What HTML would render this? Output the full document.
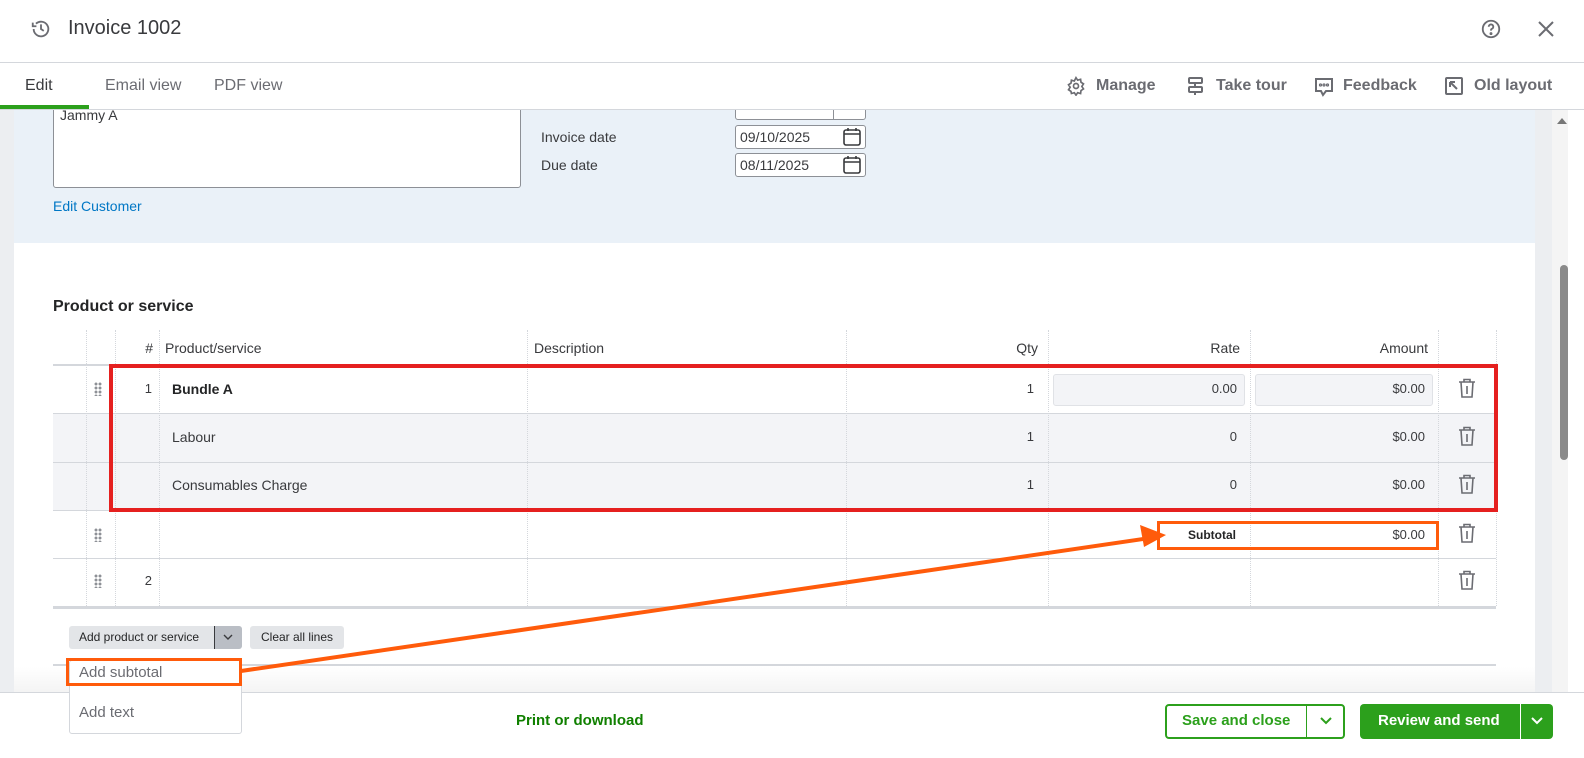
<!DOCTYPE html>
<html><head><meta charset="utf-8"><style>
*{box-sizing:border-box;margin:0;padding:0}
body{width:1584px;height:758px;overflow:hidden;background:#fff;font-family:"Liberation Sans",sans-serif;color:#393a3d;position:relative}
.a{position:absolute}
.t{font-size:14px}
.r{text-align:right}
.vl{position:absolute;width:0;border-left:1px dotted #d4d7dc}
.hl{position:absolute;height:1px;background:#d4d7dc}
.dots{position:absolute;width:8px;height:14px;background:radial-gradient(circle,#8d9096 1.3px,transparent 1.6px) 0 0/4px 4px}
</style></head><body>
<!-- side strips -->
<div class="a" style="left:0;top:110px;width:14px;height:582px;background:#eceef1"></div>
<div class="a" style="left:1535px;top:110px;width:17px;height:582px;background:#eceef1"></div>
<div class="a" style="left:1552px;top:110px;width:16px;height:582px;background:#f4f4f4"></div>
<div class="a" style="left:1560px;top:265px;width:8px;height:195px;background:#8a8a8a;border-radius:4px"></div>
<div class="a" style="left:1557px;top:118px;border:5px solid transparent;border-bottom:6px solid #777;border-top:0"></div>
<!-- blue area -->
<div class="a" style="left:14px;top:110px;width:1521px;height:133px;background:#eaf1f8"></div>
<div class="a" style="left:53px;top:90px;width:468px;height:98px;background:#fff;border:1px solid #8d9096;border-radius:3px"></div>
<div class="a t" style="left:60px;top:107px;color:#393a3d">Jammy A</div>
<div class="a" style="left:53px;top:198px;font-size:14px;color:#0077c5">Edit Customer</div>
<div class="a" style="left:735px;top:90px;width:131px;height:30px;background:#fff;border:1px solid #8d9096;border-radius:3px"></div>
<div class="a" style="left:833px;top:90px;width:1px;height:30px;background:#8d9096"></div>
<div class="a t" style="left:541px;top:129px">Invoice date</div>
<div class="a t" style="left:541px;top:157px">Due date</div>
<div class="a" style="left:735px;top:125px;width:131px;height:24px;background:#fff;border:1px solid #8d9096;border-radius:3px"></div>
<div class="a t" style="left:740px;top:129px">09/10/2025</div>
<div class="a" style="left:735px;top:153px;width:131px;height:24px;background:#fff;border:1px solid #8d9096;border-radius:3px"></div>
<div class="a t" style="left:740px;top:157px">08/11/2025</div>
<svg class="a" style="left:842px;top:127px" width="20" height="20" viewBox="0 0 20 20" fill="none" stroke="#393a3d" stroke-width="1.6"><rect x="2" y="3" width="16" height="15" rx="2"/><path d="M2 7h16M6 1v3M14 1v3"/></svg>
<svg class="a" style="left:842px;top:155px" width="20" height="20" viewBox="0 0 20 20" fill="none" stroke="#393a3d" stroke-width="1.6"><rect x="2" y="3" width="16" height="15" rx="2"/><path d="M2 7h16M6 1v3M14 1v3"/></svg>
<!-- header (on top) -->
<div class="a" style="left:0;top:0;width:1584px;height:110px;background:#fff"></div>
<svg class="a" style="left:30px;top:18px" width="22" height="22" viewBox="0 0 24 24" fill="none" stroke="#6b6c72" stroke-width="2"><path d="M4 12a8 8 0 1 0 2.5-5.8"/><path d="M3 5v4h4"/><path d="M12 7v5l3 2"/></svg>
<div class="a" style="left:68px;top:17px;font-size:20px;color:#393a3d">Invoice 1002</div>
<svg class="a" style="left:1480px;top:18px" width="22" height="22" viewBox="0 0 24 24" fill="none" stroke="#6b6c72" stroke-width="2"><circle cx="12" cy="12" r="9"/><path d="M9.5 9.5a2.5 2.5 0 1 1 3.5 2.3c-.7.3-1 .8-1 1.5v.5"/><circle cx="12" cy="17" r=".6" fill="#6b6c72"/></svg>
<svg class="a" style="left:1537px;top:20px" width="18" height="18" viewBox="0 0 18 18" stroke="#6b6c72" stroke-width="2"><path d="M2 2l14 14M16 2L2 16"/></svg>
<div class="hl" style="left:0;top:62px;width:1584px"></div>
<div class="a" style="left:25px;top:77px;font-size:16px;color:#393a3d">Edit</div>
<div class="a" style="left:0;top:105px;width:89px;height:4px;background:#2ca01c"></div>
<div class="a" style="left:105px;top:77px;font-size:16px;color:#6b6c72">Email view</div>
<div class="a" style="left:214px;top:77px;font-size:16px;color:#6b6c72">PDF view</div>
<svg class="a" style="left:1066px;top:76px" width="20" height="20" viewBox="0 0 24 24" fill="none" stroke="#6b6c72" stroke-width="2"><circle cx="12" cy="12" r="3"/><path d="M12 2l2 3 3.5-1 .5 3.5 3 2-2 3 2 3-3 2-.5 3.5-3.5-1-2 3-2-3-3.5 1L6 18.5 3 16.5l2-3-2-3 3-2L6.5 5 10 6z"/></svg>
<div class="a" style="left:1096px;top:77px;font-size:16px;font-weight:bold;color:#6b6c72">Manage</div>
<svg class="a" style="left:1186px;top:76px" width="20" height="20" viewBox="0 0 20 20" fill="none" stroke="#6b6c72" stroke-width="2"><rect x="3" y="2" width="13" height="5" rx="1"/><rect x="3" y="11" width="13" height="5" rx="1"/><path d="M9 7v4M9 16v3"/></svg>
<div class="a" style="left:1216px;top:77px;font-size:16px;font-weight:bold;color:#6b6c72">Take tour</div>
<svg class="a" style="left:1313px;top:76px" width="22" height="22" viewBox="0 0 22 22" fill="none" stroke="#6b6c72" stroke-width="2"><path d="M3 3h16v12h-6l-3 4-2-4H3z"/><circle cx="7.5" cy="9" r=".6"/><circle cx="11" cy="9" r=".6"/><circle cx="14.5" cy="9" r=".6"/></svg>
<div class="a" style="left:1343px;top:77px;font-size:16px;font-weight:bold;color:#6b6c72">Feedback</div>
<svg class="a" style="left:1444px;top:76px" width="20" height="20" viewBox="0 0 20 20" fill="none" stroke="#6b6c72" stroke-width="2"><rect x="2" y="2" width="16" height="16" rx="1"/><path d="M6 6l7 7M6 6v5M6 6h5"/></svg>
<div class="a" style="left:1474px;top:77px;font-size:16px;font-weight:bold;color:#6b6c72">Old layout</div>
<div class="hl" style="left:0;top:109px;width:1584px"></div>
<!-- product -->
<div class="a" style="left:53px;top:298px;font-size:16px;font-weight:bold;color:#242526">Product or service</div>
<div class="a" style="left:53px;top:414px;width:1443px;height:96px;background:#f3f4f7"></div>
<div class="a" style="left:1053px;top:374px;width:192px;height:32px;background:#f3f4f7;border:1px solid #e0e2e6;border-radius:3px"></div>
<div class="a" style="left:1255px;top:374px;width:178px;height:32px;background:#f3f4f7;border:1px solid #e0e2e6;border-radius:3px"></div>
<div class="hl" style="left:53px;top:364px;width:1443px;height:2px"></div>
<div class="hl" style="left:53px;top:413px;width:1443px"></div>
<div class="hl" style="left:53px;top:462px;width:1443px"></div>
<div class="hl" style="left:53px;top:510px;width:1443px"></div>
<div class="hl" style="left:53px;top:558px;width:1443px"></div>
<div class="hl" style="left:53px;top:606px;width:1443px;height:3px"></div>
<div class="hl" style="left:53px;top:664px;width:1443px;height:2px"></div>
<div class="vl" style="left:86px;top:330px;height:276px"></div>
<div class="vl" style="left:115px;top:330px;height:276px"></div>
<div class="vl" style="left:159px;top:330px;height:276px"></div>
<div class="vl" style="left:527px;top:330px;height:276px"></div>
<div class="vl" style="left:846px;top:330px;height:276px"></div>
<div class="vl" style="left:1048px;top:330px;height:276px"></div>
<div class="vl" style="left:1250px;top:330px;height:276px"></div>
<div class="vl" style="left:1438px;top:330px;height:276px"></div>
<div class="vl" style="left:1496px;top:330px;height:276px"></div>
<div class="a t r" style="left:115px;top:340px;width:38px">#</div>
<div class="a t" style="left:165px;top:340px">Product/service</div>
<div class="a t" style="left:534px;top:340px">Description</div>
<div class="a t r" style="left:846px;top:340px;width:192px">Qty</div>
<div class="a t r" style="left:1048px;top:340px;width:192px">Rate</div>
<div class="a t r" style="left:1250px;top:340px;width:178px">Amount</div>
<div class="dots" style="left:94px;top:382px"></div>
<div class="dots" style="left:94px;top:528px"></div>
<div class="dots" style="left:94px;top:574px"></div>
<div class="a t r" style="left:115px;top:381px;width:37px;font-size:13px">1</div>
<div class="a t" style="left:172px;top:381px;font-weight:bold;color:#242526">Bundle A</div>
<div class="a t r" style="left:846px;top:381px;width:188px;font-size:13px">1</div>
<div class="a t r" style="left:1048px;top:381px;width:189px;font-size:13px">0.00</div>
<div class="a t r" style="left:1250px;top:381px;width:175px;font-size:13px">$0.00</div>
<div class="a t" style="left:172px;top:429px">Labour</div>
<div class="a t r" style="left:846px;top:429px;width:188px;font-size:13px">1</div>
<div class="a t r" style="left:1048px;top:429px;width:189px;font-size:13px">0</div>
<div class="a t r" style="left:1250px;top:429px;width:175px;font-size:13px">$0.00</div>
<div class="a t" style="left:172px;top:477px">Consumables Charge</div>
<div class="a t r" style="left:846px;top:477px;width:188px;font-size:13px">1</div>
<div class="a t r" style="left:1048px;top:477px;width:189px;font-size:13px">0</div>
<div class="a t r" style="left:1250px;top:477px;width:175px;font-size:13px">$0.00</div>
<div class="a" style="left:1188px;top:528px;font-size:12px;font-weight:bold;color:#242526">Subtotal</div>
<div class="a r" style="left:1250px;top:527px;width:175px;font-size:13px">$0.00</div>
<div class="a t r" style="left:115px;top:573px;width:37px;font-size:13px">2</div>
<svg class="a" style="left:1458px;top:378px" width="18" height="20" viewBox="0 0 18 20" fill="none" stroke="#6b6c72" stroke-width="1.6"><path d="M1 4h16M6 4V1.5h6V4M3 4l1 15h10l1-15M9 8v8"/></svg>
<svg class="a" style="left:1458px;top:426px" width="18" height="20" viewBox="0 0 18 20" fill="none" stroke="#6b6c72" stroke-width="1.6"><path d="M1 4h16M6 4V1.5h6V4M3 4l1 15h10l1-15M9 8v8"/></svg>
<svg class="a" style="left:1458px;top:474px" width="18" height="20" viewBox="0 0 18 20" fill="none" stroke="#6b6c72" stroke-width="1.6"><path d="M1 4h16M6 4V1.5h6V4M3 4l1 15h10l1-15M9 8v8"/></svg>
<svg class="a" style="left:1458px;top:523px" width="18" height="20" viewBox="0 0 18 20" fill="none" stroke="#6b6c72" stroke-width="1.6"><path d="M1 4h16M6 4V1.5h6V4M3 4l1 15h10l1-15M9 8v8"/></svg>
<svg class="a" style="left:1458px;top:570px" width="18" height="20" viewBox="0 0 18 20" fill="none" stroke="#6b6c72" stroke-width="1.6"><path d="M1 4h16M6 4V1.5h6V4M3 4l1 15h10l1-15M9 8v8"/></svg>
<div class="a" style="left:109px;top:364px;width:1389px;height:148px;border:4px solid #e5201f"></div>
<div class="a" style="left:1157px;top:521px;width:282px;height:29px;border:3px solid #ff5b0b"></div>
<div class="a" style="left:69px;top:626px;width:173px;height:23px;background:#e3e5e8;border-radius:3px"></div>
<div class="a" style="left:79px;top:630px;font-size:12px;color:#242526">Add product or service</div>
<div class="a" style="left:214px;top:626px;width:28px;height:23px;background:#babec5;border-left:1px solid #393a3d;border-radius:0 3px 3px 0"></div>
<svg class="a" style="left:222px;top:633px" width="12" height="8" viewBox="0 0 12 8" fill="none" stroke="#393a3d" stroke-width="1.4"><path d="M2 2l4 4 4-4"/></svg>
<div class="a" style="left:250px;top:626px;width:94px;height:23px;background:#e3e5e8;border-radius:3px"></div>
<div class="a" style="left:261px;top:630px;font-size:12px;color:#242526">Clear all lines</div>
<!-- footer -->
<div class="a" style="left:14px;top:667px;width:1521px;height:25px;background:linear-gradient(#fff,#f4f4f4)"></div>
<div class="a" style="left:0;top:692px;width:1584px;height:66px;background:#fff;border-top:1px solid #d4d7dc"></div>
<div class="a" style="left:516px;top:712px;font-size:15px;font-weight:bold;color:#108000">Print or download</div>
<div class="a" style="left:1165px;top:704px;width:180px;height:35px;border:2px solid #2ca01c;border-radius:4px"></div>
<div class="a" style="left:1306px;top:706px;width:1px;height:31px;background:#2ca01c"></div>
<div class="a" style="left:1182px;top:712px;font-size:15px;font-weight:bold;color:#2ca01c">Save and close</div>
<svg class="a" style="left:1319px;top:716px" width="14" height="10" viewBox="0 0 14 10" fill="none" stroke="#2ca01c" stroke-width="2"><path d="M2 2l5 5 5-5"/></svg>
<div class="a" style="left:1360px;top:704px;width:193px;height:35px;background:#2ca01c;border-radius:4px"></div>
<div class="a" style="left:1520px;top:704px;width:1px;height:35px;background:#fff"></div>
<div class="a" style="left:1378px;top:712px;font-size:15px;font-weight:bold;color:#fff">Review and send</div>
<svg class="a" style="left:1530px;top:716px" width="14" height="10" viewBox="0 0 14 10" fill="none" stroke="#fff" stroke-width="2"><path d="M2 2l5 5 5-5"/></svg>
<!-- dropdown -->
<div class="a" style="left:69px;top:660px;width:173px;height:74px;background:#fff;border:1px solid #d4d7dc;border-radius:3px"></div>
<div class="a" style="left:79px;top:664px;font-size:15px;color:#6b6c72">Add subtotal</div>
<div class="a" style="left:79px;top:704px;font-size:15px;color:#6b6c72">Add text</div>
<div class="a" style="left:66px;top:658px;width:176px;height:28px;border:3px solid #ff5b0b"></div>
<svg class="a" style="left:0;top:0" width="1584" height="758"><line x1="241" y1="671" x2="1150" y2="538" stroke="#ff5b0b" stroke-width="4"/><path d="M1166 535l-26 -10 4 22z" fill="#ff5b0b"/></svg>
</body></html>
